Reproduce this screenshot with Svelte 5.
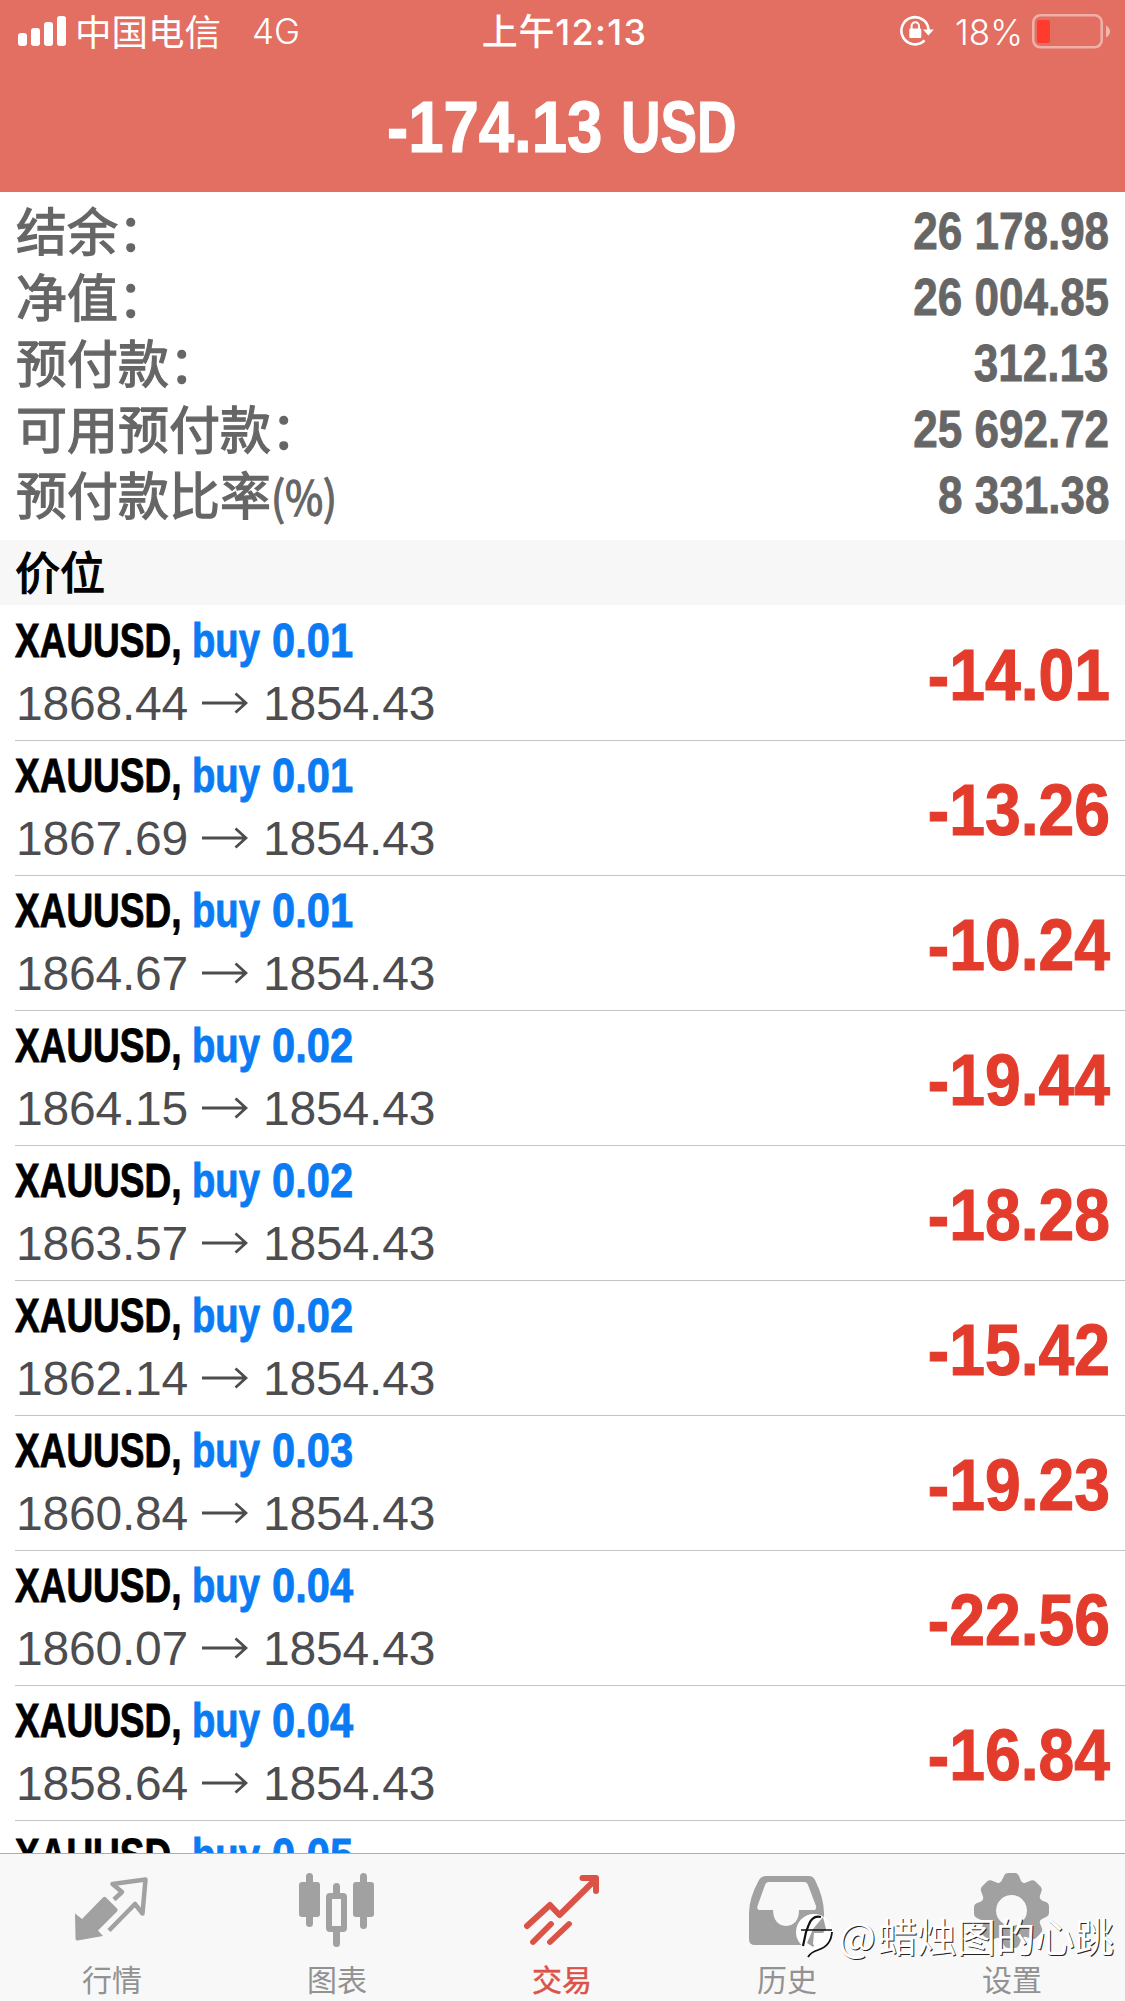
<script>
    const summary = [
        { label: "结余：", value: "26 178.98" },
        { label: "净值：", value: "26 004.85" },
        { label: "预付款：", value: "312.13" },
        { label: "可用预付款：", value: "25 692.72" },
        { label: "预付款比率", unit: "(%)", value: "8 331.38" }
    ]

    const current = "1854.43"

    const positions = [
        { lots: "0.01", open: "1868.44", profit: "-14.01" },
        { lots: "0.01", open: "1867.69", profit: "-13.26" },
        { lots: "0.01", open: "1864.67", profit: "-10.24" },
        { lots: "0.02", open: "1864.15", profit: "-19.44" },
        { lots: "0.02", open: "1863.57", profit: "-18.28" },
        { lots: "0.02", open: "1862.14", profit: "-15.42" },
        { lots: "0.03", open: "1860.84", profit: "-19.23" },
        { lots: "0.04", open: "1860.07", profit: "-22.56" },
        { lots: "0.04", open: "1858.64", profit: "-16.84" },
        { lots: "0.05", open: "", profit: "" }
    ]

    const tabs = [
        { id: "quotes", label: "行情" },
        { id: "chart", label: "图表" },
        { id: "trade", label: "交易" },
        { id: "history", label: "历史" },
        { id: "settings", label: "设置" }
    ]

    let active = $state("trade")
</script>

<div class="screen">
    <header>
        <div class="status">
            <div class="carrier">
                <svg class="signal" width="48" height="31" viewBox="0 0 48 31" fill="#fff">
                    <rect x="0" y="17" width="9" height="13" rx="3" />
                    <rect x="13" y="12" width="9" height="18" rx="3" />
                    <rect x="26" y="6" width="9" height="24" rx="3" />
                    <rect x="39" y="0" width="9" height="30" rx="3" />
                </svg>
                <span class="operator">中国电信</span>
                <span class="network">4G</span>
            </div>
            <div class="clock">上午<span>12:13</span></div>
            <div class="power">
                <svg width="34" height="32" viewBox="0 0 34 32">
                    <path d="M24.6 25.4A13.6 13.6 0 1 1 28.6 15" fill="none" stroke="#fff" stroke-width="2.6" />
                    <path d="M23 14.5h10.8l-5.4 6z" fill="#fff" />
                    <rect x="9.3" y="13.5" width="12" height="9.5" rx="1" fill="#fff" />
                    <path d="M11.6 14v-3a3.700 3.700 0 0 1 7.400 0v3" fill="none" stroke="#fff" stroke-width="2" />
                </svg>
                <span class="percent">18%</span>
                <svg width="79" height="35" viewBox="0 0 79 35">
                    <rect x="1.3" y="1.3" width="68.4" height="32" rx="7" fill="none" stroke="#fff" stroke-opacity=".45" stroke-width="2.6" />
                    <rect x="5" y="6" width="13" height="23" rx="2" fill="#ff3b2d" />
                    <path d="M74 11.500q4 2.500 4 6t-4 6z" fill="#fff" opacity=".5" />
                </svg>
            </div>
        </div>
        <h1><span class="amount">-174.13</span><span class="currency">USD</span></h1>
    </header>

    <section class="summary">
        {#each summary as row}
            <div class="line">
                <span class="label">{row.label}{#if row.unit}<span class="unit">{row.unit}</span>{/if}</span>
                <span class="value">{row.value}</span>
            </div>
        {/each}
    </section>

    <h2>价位</h2>

    <main>
        {#each positions as p}
            <div class="position">
                <div class="deal">
                    <div class="name">
                        <span class="symbol">XAUUSD,</span>
                        <span class="side">buy</span>
                        <span class="lots">{p.lots}</span>
                    </div>
                    {#if p.open}
                        <div class="prices">
                            <span>{p.open}</span>
                            <svg width="46" height="22" viewBox="0 0 46 22" fill="none" stroke="#4d4d50" stroke-width="2.8">
                                <path d="M0 11H44M33.500 1.500L44 11L33.500 20.500" />
                            </svg>
                            <span>{current}</span>
                        </div>
                    {/if}
                </div>
                <div class="profit">{p.profit}</div>
            </div>
        {/each}
    </main>

    <nav>
        {#each tabs as tab}
            <button class:active={tab.id === active} onclick={() => (active = tab.id)}>
                <svg width="76" height="76" viewBox="0 0 76 76" fill="currentColor">
                    {#if tab.id === "quotes"}
                        <path d="M1 40.500L8 46L29 24.500q1.500-1.500 3 0L43 35.500q1.500 1.500 0 3L24 57.500L29 63L3.500 67.500q-2 .3-2-2z" />
                        <path d="M40 26.500L48 19L38.500 11L71.500 6.500L68.500 40.500L61 31L35 57.500" fill="none" stroke="currentColor" stroke-width="4.500" stroke-linejoin="round" />
                    {:else if tab.id === "chart"}
                        <rect x="7" y="0" width="7" height="54" rx="3.500" />
                        <rect x="0" y="9" width="21" height="35" rx="3" />
                        <rect x="61" y="0" width="7" height="56" rx="3.500" />
                        <rect x="54" y="9" width="21" height="35" rx="3" />
                        <rect x="34" y="10" width="7" height="15" rx="3.500" />
                        <rect x="34" y="54" width="7" height="20" rx="3.500" />
                        <rect x="30" y="23" width="15" height="33" rx="1" fill="none" stroke="currentColor" stroke-width="6" />
                    {:else if tab.id === "trade"}
                        <g fill="none" stroke="currentColor" stroke-width="6" stroke-linecap="round" stroke-linejoin="round">
                            <path d="M3 53L26 32L35.500 42L70 8" />
                            <path d="M58.500 5H72V18" />
                            <path d="M9 69L27 51M26 69L45 51" stroke-width="5.800" />
                        </g>
                    {:else if tab.id === "history"}
                        <path fill-rule="evenodd" d="M17 3H60q4 0 6 4Q75 25 75 40V66q0 6-6 6H6q-6 0-6-6V40Q0 25 10 7Q12 3 17 3zM20 9q-3 0-4 3L8.500 33q-1 4 2 4H24q.5 15 13 16Q50 52 50 37H64q4 0 3-4L59 12q-1-3-4-3z" />
                    {:else}
                        <path fill-rule="evenodd" d="M30 3Q31 0 34.500 0h6q3.500 0 4.500 3L47 8q2 3 5 1.500L57 7.500q2.500-.8 4.500 1l5 5q1.800 2 1 4.500L66 22.500q-1 3 2 5l5 2q2 1 2 4v6q0 3-2 4l-5 2.500q-3 1.500-2 4.500l2 5q.8 2.500-1 4.500l-5 5q-2 1.800-4.500 1l-5-2q-3-1-5 1.500L45 72q-1 3-4.500 3h-6q-3.500 0-4.500-3l-2.500-5.500q-2-2.500-5-1.500l-5 2q-2.500.8-4.500-1l-5-5q-1.800-2-1-4.500l2-5q1-3-2-4.500l-5-2.500q-2-1-2-4v-6q0-3 2-4l5-2q3-2 2-5L7 18q-.8-2.500 1-4.500l5-5q2-1.800 4.500-1l5 2q3 1.500 5-1.500zM37.500 22a15.500 15.500 0 1 0 .01 0z" />
                    {/if}
                </svg>
                <span>{tab.label}</span>
            </button>
        {/each}
    </nav>

    <div class="watermark">
        <svg width="40" height="46" viewBox="0 0 40 46">
            <circle cx="19" cy="20" r="18" fill="#fff" />
            <path d="M27 36Q20 38 14 44Q16 39 17 35z" fill="#fff" />
            <path d="M18 17L28 5L31 17L18 35L12 31z" fill="#a1a1a1" />
            <path d="M26 5Q17 3 13.500 13.500L11 20L8 34" fill="none" stroke="#111" stroke-width="2.200" />
            <path d="M6 18H37" stroke="#111" stroke-width="1.500" />
            <path d="M19 21H34L24 33Q20 36 18 32z" fill="#fff" />
            <path d="M37 20Q36 34 23 38Q16 40 13 45" fill="none" stroke="#111" stroke-width="1.800" />
        </svg>
        <span class="at">@</span><span>蜡烛图的心跳</span>
    </div>
</div>

<style>
    :global(body) {
        background: #fff;
    }

    .screen {
        position: relative;
        display: flex;
        flex-direction: column;
        width: 1125px;
        height: 2001px;
        overflow: hidden;
        background: #fff;
        font-family: "Liberation Sans", "Noto Sans CJK SC", sans-serif;
    }

    header {
        flex: none;
        height: 192px;
        background: #e26f62;
        color: #fff;
    }

    .status {
        display: grid;
        grid-template-columns: 1fr auto 1fr;
        align-items: center;
        height: 60px;
        padding: 0 14px 0 18px;
        font: 35px/60px Inter, "Noto Sans CJK SC", sans-serif;
    }

    .carrier,
    .power {
        display: flex;
        align-items: center;
    }

    .operator {
        margin-left: 9px;
        font-family: "Noto Sans CJK SC", sans-serif;
        font-size: 36.5px;
    }

    .network {
        margin-left: 31px;
        font-weight: 350;
    }

    .clock {
        padding-top: 2px;
        font-size: 36px;
        font-weight: 500;
        letter-spacing: 0.8px;
    }

    .clock span {
        letter-spacing: 1.3px;
    }

    .power {
        justify-content: flex-end;
    }

    .percent {
        margin: 0 9px 0 21px;
        padding-top: 2px;
        font-weight: 350;
    }

    h1 {
        display: flex;
        justify-content: center;
        margin: 0;
        padding-right: 2px;
        font-size: 73px;
        line-height: 134px;
        font-weight: 700;
        -webkit-text-stroke: 1.2px;
    }

    .amount,
    .currency,
    .value,
    .profit,
    .symbol,
    .side,
    .lots,
    .unit {
        display: inline-block;
        white-space: nowrap;
        transform-origin: left center;
    }

    .amount {
        width: 234px;
        transform: scaleX(0.87);
    }

    .currency {
        width: 116px;
        transform: scaleX(0.75);
    }

    .summary {
        flex: none;
        height: 343px;
        padding: 5px 16px 0 16px;
        color: #666;
    }

    .line {
        display: flex;
        justify-content: space-between;
        height: 66px;
        line-height: 66px;
    }

    .label {
        margin-top: -1px;
        font-family: "Noto Sans CJK SC", sans-serif;
        font-size: 51px;
        -webkit-text-stroke: 1.3px;
    }

    .unit {
        font-size: 46px;
        transform: scaleX(0.9);
    }

    .value {
        padding-top: 1px;
        font-size: 51.5px;
        font-weight: 700;
        transform: scaleX(0.855);
        transform-origin: right center;
        -webkit-text-stroke: 0.8px;
    }

    h2 {
        flex: none;
        height: 65px;
        margin: 0;
        padding-left: 15px;
        background: #f7f7f7;
        color: #000;
        font: 400 45px/62px "Noto Sans CJK SC", sans-serif;
        -webkit-text-stroke: 1.3px;
    }

    main {
        flex: 1;
        min-height: 0;
        overflow: hidden;
        padding-top: 1px;
    }

    .position {
        display: flex;
        justify-content: space-between;
        height: 134px;
        margin-left: 15px;
        padding-right: 15px;
        border-bottom: 1px solid #c4c4c6;
    }

    .name {
        display: flex;
        height: 66px;
        font-size: 49px;
        line-height: 69px;
        font-weight: 700;
        -webkit-text-stroke: 0.9px;
    }

    .symbol {
        width: 177px;
        color: #000;
        transform: scaleX(0.755);
    }

    .side {
        width: 80px;
        color: #0a7bf2;
        transform: scaleX(0.78);
    }

    .lots {
        color: #0a7bf2;
        transform: scaleX(0.85);
    }

    .prices {
        display: flex;
        align-items: center;
        height: 64px;
        padding-left: 1px;
        color: #4d4d50;
        font-size: 48px;
        line-height: 64px;
    }

    .prices span {
        letter-spacing: -0.2px;
    }

    .prices svg {
        margin: 0 15px 2px 14px;
    }

    .profit {
        color: #e33c2c;
        font-size: 73px;
        font-weight: 700;
        line-height: 137px;
        transform: scaleX(0.88);
        transform-origin: right center;
        -webkit-text-stroke: 1.2px;
    }

    nav {
        flex: none;
        display: flex;
        height: 147px;
        border-top: 1px solid #aeaeae;
        background: #f8f8f8;
    }

    button {
        flex: 1;
        display: flex;
        flex-direction: column;
        align-items: center;
        padding: 19px 1px 0 0;
        border: none;
        background: none;
        color: #a1a1a1;
        font: 30px/44px "Noto Sans CJK SC", sans-serif;
    }

    button span {
        margin-top: 7px;
        color: #929292;
    }

    button.active,
    .active span {
        color: #db5246;
    }

    .active span {
        -webkit-text-stroke: 0.5px;
    }

    .watermark {
        position: absolute;
        right: 11px;
        bottom: 41px;
        display: flex;
        align-items: center;
        color: #fff;
        font: 39.4px/50px "Noto Sans CJK SC", sans-serif;
        text-shadow: 1px 1px 0 #222;
    }

    .at {
        margin: 0 2px 0 3px;
    }
</style>
